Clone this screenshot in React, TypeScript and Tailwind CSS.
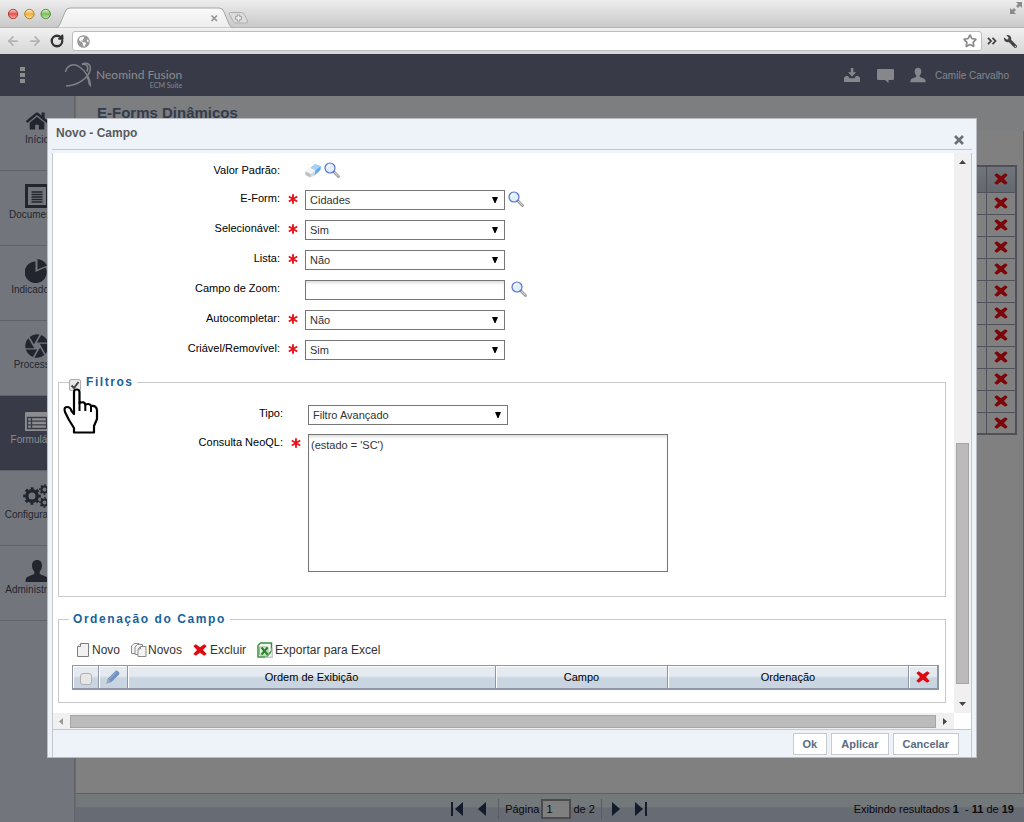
import React from "react";
import { FaHome, FaWrench, FaGlobeAmericas } from "react-icons/fa";
import { MdCamera } from "react-icons/md";
import { ArrowLeft, ArrowRight, Star, RotateCw } from "lucide-react";

const BustIcon = ({ className }: { className?: string }) => (
  <svg viewBox="0 0 24 24" className={className} fill="currentColor" aria-hidden="true">
    <path d="M12 1c3.3 0 5 2.3 5 5.5 0 2.6-.8 4.6-2.3 6v2.3c0 .8 7.3 2.4 8.3 4.7.4 1 .5 2.3.5 3.5H.5c0-1.2.1-2.5.5-3.5 1-2.3 8.3-3.9 8.3-4.7v-2.3C7.8 11.1 7 9.1 7 6.5 7 3.3 8.7 1 12 1z" />
  </svg>
);

const DocumentIcon = ({ className }: { className?: string }) => (
  <svg viewBox="0 0 24 24" className={className} fill="none" stroke="currentColor" aria-hidden="true">
    <rect x="1.5" y="1.5" width="21" height="21" strokeWidth="3" />
    <path d="M6.500 8h11M6.500 10.500h11M6.500 13h11M6.500 15.500h11M6.500 18h11" strokeWidth="1.3" />
  </svg>
);

const PieIcon = ({ className }: { className?: string }) => (
  <svg viewBox="0 0 24 24" className={className} fill="currentColor" aria-hidden="true">
    <path d="M10.500 2.500V13l10-4.500A11 10.800 0 1 1 10.500 2.500z" />
    <path d="M12.500 0a12 12 0 0 1 9.500 6.500L12.500 10.500z" />
  </svg>
);

const GearsIcon = ({ className }: { className?: string }) => (
  <svg viewBox="0 0 28 24" className={className} fill="none" stroke="currentColor" aria-hidden="true">
    <circle cx="9" cy="12" r="5.200" strokeWidth="3.400" />
    <circle cx="9" cy="12" r="7.600" strokeWidth="2.400" strokeDasharray="2.980 2.980" strokeDashoffset="1.500" />
    <circle cx="21.500" cy="5.500" r="3" strokeWidth="2" />
    <circle cx="21.500" cy="5.500" r="4.500" strokeWidth="1.600" strokeDasharray="1.770 1.770" strokeDashoffset=".9" />
    <circle cx="21.500" cy="18.500" r="3" strokeWidth="2" />
    <circle cx="21.500" cy="18.500" r="4.500" strokeWidth="1.600" strokeDasharray="1.770 1.770" strokeDashoffset=".9" />
  </svg>
);

const FormListIcon = ({ className }: { className?: string }) => (
  <svg viewBox="0 0 24 24" className={className} aria-hidden="true">
    <rect x="0" y="3" width="24" height="19" rx="1" fill="currentColor" />
    <path d="M2.500 8.500h19v11h-19zM2.500 12.200h19M2.500 15.900h19M6.500 8.500v11" fill="none" stroke="#383b47" strokeWidth="1.3" />
  </svg>
);

const Magnifier = () => (
  <svg viewBox="0 0 16 16" className="size-4" aria-hidden="true">
    <path d="M9.500 9.500l5 5" stroke="#8a8a8a" strokeWidth="2.6" strokeLinecap="round" />
    <path d="M10.500 10.300l3.800 3.800" stroke="#d8d8d8" strokeWidth="1.200" strokeLinecap="round" />
    <circle cx="6" cy="6" r="5" fill="#e2eefb" stroke="#5574cf" strokeWidth="1.2" />
    <path d="M3.200 5.600a3 3 0 0 1 2.600-2.400" stroke="#fff" strokeWidth="1.2" fill="none" />
  </svg>
);

const Eraser = () => (
  <svg viewBox="0 0 16 16" className="size-4" aria-hidden="true">
    <path d="M5.500 6L10 2.200l5.800 2L15.500 8l-6 5.500z" fill="#5aa9ea" />
    <path d="M5.500 6L10 2.200l5.800 2-5.500 4.300z" fill="#a5d3f7" />
    <path d="M0.500 9.500L5.500 6l5 2.500-1 5L5 15.500l-4.500-2.500z" fill="#d4d8dc" />
    <path d="M0.500 9.500L5.500 6l5 2.500-5 3.500z" fill="#f3f5f7" />
    <path d="M0.500 9.500l5 2.500v3.300l-5-2.300z" fill="#bcc1c6" />
  </svg>
);

const RedCross = ({ className }: { className?: string }) => (
  <svg viewBox="0 0 14 12" className={className} aria-hidden="true">
    <path
      d="M2.800.3l4.200 3L11.200.3 13.700 2l-3.700 4 3.700 4-2.500 1.800L7 8.700l-4.200 3L.3 10 4 6 .3 2z"
      fill="currentColor"
    />
  </svg>
);

const Required = () => (
  <svg viewBox="0 0 10 10" className="mt-1 size-[10px] justify-self-center" role="img" aria-label="obrigatório">
    <path d="M5 .3v9.400M.8 2.500l8.400 5M9.200 2.500l-8.400 5" stroke="#e8141c" strokeWidth="1.9" />
  </svg>
);

const menu = [
  { label: "Início", icon: <FaHome className="size-[22px]" /> },
  { label: "Documentos", icon: <DocumentIcon className="size-6" /> },
  { label: "Indicadores", icon: <PieIcon className="size-6" /> },
  { label: "Processos", icon: <MdCamera className="size-7" /> },
  { label: "Formulários", icon: <FormListIcon className="size-6" />, active: true },
  { label: "Configurações", icon: <GearsIcon className="h-6 w-7" /> },
  { label: "Administração", icon: <BustIcon className="size-6" /> },
];

function BrowserChrome() {
  return (
    <div className="shrink-0">
      <div className="flex h-7 items-start border-b border-[#b4b4b4] bg-linear-to-b from-[#ededed] to-[#c9c9c9]">
        <svg viewBox="0 0 60 28" className="h-7 w-[56px] shrink-0" aria-hidden="true">
          <defs>
            <linearGradient id="shine" x1="0" y1="0" x2="0" y2="1">
              <stop offset="0" stopColor="#fff" stopOpacity=".7" />
              <stop offset=".5" stopColor="#fff" stopOpacity="0" />
              <stop offset="1" stopColor="#fff" stopOpacity=".5" />
            </linearGradient>
          </defs>
          {[
            [14, "#e8524c", "#a33631"],
            [31.5, "#f1b23c", "#a97722"],
            [49, "#7cc05a", "#4c8434"],
          ].map(([cx, fill, stroke]) => (
            <g key={String(cx)}>
              <circle cx={cx as number} cy="14" r="5" fill={fill as string} stroke={stroke as string} />
              <circle cx={cx as number} cy="14" r="4.5" fill="url(#shine)" />
            </g>
          ))}
        </svg>
        <svg viewBox="0 0 194 28" className="h-7 w-[194px] shrink-0" aria-hidden="true">
          <defs>
            <linearGradient id="tab" x1="0" y1="0" x2="0" y2="1">
              <stop offset="0" stopColor="#fafafa" />
              <stop offset="1" stopColor="#ededed" />
            </linearGradient>
          </defs>
          <path d="M0 28q3-1 4-4l5-12q1-4 5-4h149q4 0 5 4l5 12q1 3 4 4z" fill="url(#tab)" stroke="#a6a6a6" />
          <path d="M155.500 15.500l5.500 5.500M161 15.500l-5.500 5.500" stroke="#949494" strokeWidth="1.7" />
          <path d="M174.500 12.500h11q2 0 3 2l3 6.500q1 2-1.500 2h-10q-2 0-3-2l-3.500-6.500q-1-2 1-2z" fill="#dcdcdc" stroke="#aeaeae" />
          <path d="M182.500 14.500v7M179 18h7" stroke="#a0a0a0" strokeWidth="3.5" />
          <path d="M182.500 15.500v5M180 18h5" stroke="#f6f6f6" strokeWidth="1.5" />
        </svg>
        <svg viewBox="0 0 12 12" className="mt-[2px] mr-[2px] ml-auto size-3" fill="#8b8b8b" aria-hidden="true">
          <path d="M6 0h6v6l-2-2-2 2-2-2 2-2zM0 6l2 2 2-2 2 2-2 2 2 2H0z" />
        </svg>
      </div>
      <div className="flex h-[26px] items-center bg-linear-to-b from-[#f1f1f1] to-[#d6d6d6] pr-[7px] pl-[6px]">
        <button aria-label="Voltar" className="mr-2 text-[#b4b4b4]">
          <ArrowLeft className="size-[14px]" strokeWidth={3} />
        </button>
        <button aria-label="Avançar" className="mr-2 text-[#b4b4b4]">
          <ArrowRight className="size-[14px]" strokeWidth={3} />
        </button>
        <button aria-label="Recarregar" className="mr-2 text-[#333]">
          <RotateCw className="size-[14px]" strokeWidth={4} />
        </button>
        <div className="flex h-5 flex-1 items-center rounded-[3px] border border-[#bdbdbd] bg-white px-1">
          <FaGlobeAmericas className="size-[13px] text-[#9a9a9a]" />
          <input aria-label="Endereço" className="min-w-0 flex-1 bg-transparent px-1 text-xs outline-none" />
          <Star className="size-[14px] text-[#8a8a8a]" strokeWidth={3} />
        </div>
        <svg viewBox="0 0 10 8" className="ml-[5px] h-2 w-[10px]" fill="none" stroke="#444" strokeWidth="1.8" aria-hidden="true">
          <path d="M1 .8L4 4 1 7.200M5.500.8l3 3.200-3 3.200" />
        </svg>
        <FaWrench className="ml-[7px] size-[13px] -scale-x-100 text-[#444]" />
      </div>
    </div>
  );
}

function AppHeader() {
  return (
    <header className="flex h-[42px] shrink-0 items-center bg-[#383b47] pr-[15px] text-[#85878b]">
      <button aria-label="Menu" className="ml-5 grid w-[5px] gap-[2px]">
        <span className="h-[4px] bg-[#8d8d8d]" />
        <span className="h-[4px] bg-[#8d8d8d]" />
        <span className="h-[4px] bg-[#8d8d8d]" />
      </button>
      <svg viewBox="0 0 28 26" className="ml-[39px] h-[26px] w-7" fill="none" stroke="#808286" aria-hidden="true">
        <path d="M1.500 10C2.500 4 9 .5 15 4.500S25.500 15 26.500 24.500" strokeWidth="1.5" />
        <path d="M18 2c6-2 9.500 1 8 6.500C24 16 14 23.500 2 24" strokeWidth="1.5" />
        <path d="M18 2.500c5-1 7 2 5 7" strokeWidth="1.5" />
        <path d="M23 13.500q2.500 4.500 3 9.500" strokeWidth="2.5" />
      </svg>
      <div className="ml-1 flex flex-col items-end pt-[7px] font-[Lato,sans-serif]">
        <span className="text-[12px] leading-[12px] font-medium">Neomind Fusion</span>
        <span className="text-[7px] leading-[8px]">ECM Suite</span>
      </div>
      <div className="ml-auto flex items-center">
        <svg viewBox="0 0 16 14" className="mr-[17px] h-[14px] w-4" fill="currentColor" aria-label="Downloads">
          <path d="M6.800 0h2.600v4.200h2.800L8 8.500 3.900 4.200h2.900z" />
          <path d="M0 9.500l2-1.600h2l1.500 2.300h5L12 7.900h2l2 1.600V14H0z" />
        </svg>
        <svg viewBox="0 0 17 15" className="mr-4 h-[15px] w-[17px]" fill="currentColor" aria-label="Mensagens">
          <path d="M1 1h15q1 0 1 1v9q0 1-1 1h-4.500v3L8 12H1q-1 0-1-1V2q0-1 1-1z" />
        </svg>
        <BustIcon className="mr-[9px] size-4" />
        <a href="#" className="text-[10px]">Camile Carvalho</a>
      </div>
    </header>
  );
}

function Sidebar() {
  return (
    <nav className="w-[75px] shrink-0 border-r border-[#63656a] bg-[#73757d]">
      {menu.map((m) => (
        <a
          key={m.label}
          href="#"
          className={
            m.active
              ? "flex h-[75px] flex-col items-center border-b border-[#5d5f69] bg-[#383b47] text-[#8c8d90]"
              : "flex h-[75px] flex-col items-center border-b border-[#5f616b] text-[#23252e]"
          }
        >
          <span className="mt-[13px] flex h-6 items-center justify-center">{m.icon}</span>
          <span className="text-[10px] leading-[14px]">{m.label}</span>
        </a>
      ))}
    </nav>
  );
}

function Background() {
  return (
    <main className="flex min-w-0 flex-1 flex-col border-l border-[#6a6a6c] bg-[#808080]">
      <h1 className="h-[35px] bg-[#7c7e80] pl-[21px] text-[15px] leading-[34px] font-bold text-[#343c4c]">E-Forms Dinâmicos</h1>
      <div className="flex-1 border-r border-[#5f5f61] pt-[34px] pr-[6px] pl-5">
        <table className="w-full border-collapse border-2 border-[#50505a]">
          <tbody>
            {Array.from({ length: 12 }, (_, i) => (
              <tr key={i} className={i === 0 ? "h-[26px] bg-linear-to-b from-[#71767b] to-[#64696f]" : "h-[22px]"}>
                <td className="border border-[#50505a]" />
                <td className="w-[30px] border border-[#50505a] p-0 pl-px">
                  <button aria-label="Excluir" className="mx-auto block">
                    <RedCross className="h-3 w-[14px] text-[#7c0509]" />
                  </button>
                </td>
              </tr>
            ))}
          </tbody>
        </table>
      </div>
      <footer className="grid h-[29px] grid-cols-[1fr_auto_1fr] items-center border-t border-[#5b5e62] bg-linear-to-b from-[#73787b] from-45% to-[#676b74] to-50% pt-[2px] text-[11px] text-[#0a0a0a]">
        <div />
        <div className="flex items-center pr-[2px]">
          <button aria-label="Primeira página">
            <svg viewBox="0 0 12 14" className="mr-[15px] h-[14px] w-3" fill="#141b2b"><path d="M0 0h2v14H0zM12 0v14L4 7z" /></svg>
          </button>
          <button aria-label="Página anterior">
            <svg viewBox="0 0 8 14" className="mr-3 h-[14px] w-2" fill="#141b2b"><path d="M8 0v14L0 7z" /></svg>
          </button>
          <span className="mr-[6px] h-5 w-px bg-[#585b60]" />
          <label htmlFor="page">Página</label>
          <input id="page" defaultValue="1" className="mx-[2px] h-5 w-[30px] border-2 border-[#4c4c4e] bg-[#7f7f7f] px-[3px]" />
          <span>de 2</span>
          <span className="mr-[10px] ml-[6px] h-5 w-px bg-[#585b60]" />
          <button aria-label="Próxima página">
            <svg viewBox="0 0 8 14" className="mr-[15px] h-[14px] w-2" fill="#141b2b"><path d="M0 0v14l8-7z" /></svg>
          </button>
          <button aria-label="Última página">
            <svg viewBox="0 0 12 14" className="h-[14px] w-3" fill="#141b2b"><path d="M10 0h2v14h-2zM0 0v14l8-7z" /></svg>
          </button>
        </div>
        <p className="pr-[10px] text-right whitespace-pre">
          Exibindo resultados <b>1</b>{"  - "}<b>11</b> de <b>19</b>
        </p>
      </footer>
    </main>
  );
}

function Dropdown({ id, value }: { id: string; value: string }) {
  return (
    <div className="relative w-[200px]">
      <select id={id} defaultValue={value} className="block h-5 w-full appearance-none border border-[#767676] bg-white pl-1 text-[11px] text-[#333]">
        <option>{value}</option>
      </select>
      <svg viewBox="0 0 6 6" className="pointer-events-none absolute top-[7px] right-[7px] size-[6px]" aria-hidden="true">
        <path d="M0 0h6L3.500 6h-1z" />
      </svg>
    </div>
  );
}

type Field = { id: string; label: string; value?: string; required?: boolean; search?: boolean };

const fields: Field[] = [
  { id: "eform", label: "E-Form:", value: "Cidades", required: true, search: true },
  { id: "selecionavel", label: "Selecionável:", value: "Sim", required: true },
  { id: "lista", label: "Lista:", value: "Não", required: true },
  { id: "zoom", label: "Campo de Zoom:", search: true },
  { id: "auto", label: "Autocompletar:", value: "Não", required: true },
  { id: "criavel", label: "Criável/Removível:", value: "Sim", required: true },
];

const HandCursor = () => (
  <svg viewBox="0 0 38 50" className="pointer-events-none absolute top-[7px] -left-[7px] z-10 h-[50px] w-[38px]" aria-hidden="true">
    <path
      d="M12 27V6q0-2.500 2.700-2.500T17.500 6v11q5-2 5.800 1.500 4.700-1.500 5.700 1.500 5-1 6 4v9l-3 7v6.500H12V42l-5-8-4-8q-1.500-5 2-5t4.500 4l2.500 3z"
      fill="#fff"
      stroke="#000"
      strokeWidth="2.2"
      strokeLinejoin="round"
    />
    <path d="M17.500 16v9M23.300 18v7M29 20v6" stroke="#000" strokeWidth="2" />
  </svg>
);

function SortTable() {
  const head = "border-r border-[#9095a5] p-0 font-normal shadow-[inset_1px_1px_0_#fff]";
  return (
    <table className="mt-[7px] h-[25px] w-full table-fixed border-separate border-spacing-0 border border-b-2 border-[#9095a5] bg-linear-to-b from-[#e4eaf0] from-45% to-[#c9d5e1] to-55% text-[11px] text-black">
      <colgroup>
        <col className="w-[26px]" />
        <col className="w-[29px]" />
        <col />
        <col className="w-[172px]" />
        <col className="w-[241px]" />
        <col className="w-[29px]" />
      </colgroup>
      <thead>
        <tr>
          <th className={head}>
            <input type="checkbox" aria-label="Selecionar todos" className="mx-auto mt-1 block size-3 appearance-none rounded-[3px] border border-[#b0b0b0] bg-[#e6e6e6]" />
          </th>
          <th className={head}>
            <svg viewBox="0 0 14 14" className="mx-auto size-[14px]" aria-label="Editar">
              <path d="M.5 13.500l1.500-5L9.500 1q1-1 2.300.2l1 1q1.200 1.300.2 2.300L5.500 12z" fill="#6f91bf" />
              <path d="M.5 13.500l1.500-5L5.500 12z" fill="#9fa9b5" />
              <path d="M3.500 9L10 2.500" stroke="#a5bfdf" />
            </svg>
          </th>
          <th className={head}>Ordem de Exibição</th>
          <th className={head}>Campo</th>
          <th className={head}>Ordenação</th>
          <th className={head}>
            <button aria-label="Excluir" className="mx-auto block">
              <RedCross className="h-3 w-[14px] text-[#dd0a12]" />
            </button>
          </th>
        </tr>
      </thead>
    </table>
  );
}

function ActionBar() {
  return (
    <div className="flex h-4 items-center gap-[11px] pl-1 text-[12px] text-[#333]">
      <button className="flex items-center">
        <svg viewBox="0 0 14 16" className="mr-[2px] h-4 w-[14px]" aria-hidden="true">
          <path d="M4.500 1.500h8v13h-11v-10z" fill="#f1f1f1" stroke="#7e7e7e" />
          <path d="M4.500 1.500v3h-3" fill="#fff" stroke="#7e7e7e" />
        </svg>
        Novo
      </button>
      <button className="flex items-center">
        <svg viewBox="0 0 16 16" className="mr-[1px] size-4" fill="#f4f4f4" stroke="#8c8c8c" aria-hidden="true">
          <path d="M3 1.500h5v10H.5V4z" />
          <path d="M6.500 2.500h5v10H4V5z" />
          <path d="M9.500 4.500h5.500v10H7V7z" />
          <path d="M9.500 4.500V7H7" fill="none" />
        </svg>
        Novos
      </button>
      <button className="flex items-center">
        <RedCross className="mr-[3px] h-3 w-[14px] text-[#dd0a12]" />
        Excluir
      </button>
      <button className="flex items-center">
        <svg viewBox="0 0 16 16" className="mr-[2px] size-4" aria-hidden="true">
          <path d="M3.500 1h11v8l-5 6H1V3.500z" fill="#f5faf4" stroke="#3d8f3f" strokeWidth="1.500" />
          <path d="M2.500 5h8.500v8H2.500z" fill="#e3f1e0" stroke="#8cc08a" />
          <path d="M4.500 5.500l6 7M10.500 5.500L4.500 12.500" stroke="#2c7d2c" strokeWidth="2" />
          <path d="M8 15.200h7.200V6" stroke="#c2c6c2" strokeWidth="1.400" fill="none" />
        </svg>
        Exportar para Excel
      </button>
    </div>
  );
}

const legendStyle = "flex h-[14px] items-center text-[12px] leading-[14px] font-bold tracking-[0.13em] text-[#17629c]";

function Dialog() {
  const dialogButton = "h-[22px] border border-[#c6cacd] bg-white px-[9px] text-[11px] font-bold text-[#5b6b7f]";
  return (
    <section
      role="dialog"
      aria-label="Novo - Campo"
      className="absolute inset-x-[47px] top-[118px] border border-[#b9bdc1] bg-[#edf3f8] px-1"
    >
      <div className="flex h-[31px] items-start justify-between border-b border-[#c4c8cb] pr-[8px] pl-1">
        <h2 className="text-[12px] leading-7 font-bold text-[#5a5a5e]">Novo - Campo</h2>
        <button aria-label="Fechar" className="mt-4">
          <svg viewBox="0 0 10 10" className="size-[10px]" stroke="#6c7075" strokeWidth="2.6">
            <path d="M1 1l8 8M9 1L1 9" />
          </svg>
        </button>
      </div>
      <div className="mt-[3px] border-x border-[#c4c8cb]">
        <div className="grid grid-cols-[1fr_17px] bg-white">
          <form className="min-w-0 pt-[2px] pr-2 pb-[10px] pl-[5px] text-[11px] leading-4 text-black" onSubmit={(e) => e.preventDefault()}>
            <div className="grid h-[30px] grid-cols-[222px_25px_auto] items-center">
              <span className="text-right">Valor Padrão:</span>
              <span />
              <span className="flex gap-[3px]">
                <button type="button" aria-label="Limpar"><Eraser /></button>
                <button type="button" aria-label="Pesquisar"><Magnifier /></button>
              </span>
            </div>
            {fields.map((f) => (
              <div key={f.id} className="grid h-[30px] grid-cols-[222px_25px_auto] items-start pt-[5px]">
                <label htmlFor={f.id} className="text-right">{f.label}</label>
                {f.required ? <Required /> : <span />}
                <div className="flex items-start">
                  {f.value ? (
                    <Dropdown id={f.id} value={f.value} />
                  ) : (
                    <input id={f.id} className="mr-[3px] h-5 w-[200px] border border-[#767676] bg-white px-1 shadow-[inset_0_3px_3px_-1px_#ddd]" />
                  )}
                  {f.search && (
                    <button type="button" aria-label="Pesquisar" className="mt-px ml-[3px]"><Magnifier /></button>
                  )}
                </div>
              </div>
            ))}

            <fieldset className="mt-[10px] border border-[#c8c8c8] pt-4 pb-6">
              <legend className={`${legendStyle} ml-[10px] pr-[3px]`}>
                <span className="relative mt-[5px] mr-[5px] block size-3">
                  <input
                    id="filtros"
                    type="checkbox"
                    defaultChecked
                    className="block size-3 appearance-none rounded-[2px] border border-[#ababab] bg-[#e8e8e8]"
                  />
                  <svg viewBox="0 0 12 12" className="pointer-events-none absolute inset-0 size-3" fill="none" aria-hidden="true">
                    <path d="M2.500 6.500L5 9l4.500-6" stroke="#444" strokeWidth="2" />
                  </svg>
                  <HandCursor />
                </span>
                <label htmlFor="filtros">Filtros</label>
              </legend>
              <div className="grid grid-cols-[224px_25px_auto] items-start gap-y-[9px]">
                <label htmlFor="tipo" className="text-right">Tipo:</label>
                <span />
                <Dropdown id="tipo" value="Filtro Avançado" />
                <label htmlFor="query" className="text-right">Consulta NeoQL:</label>
                <Required />
                <textarea
                  id="query"
                  defaultValue="(estado = 'SC')"
                  className="block h-[138px] w-[360px] resize-none border border-[#767676] bg-white p-[2px] text-[#333] shadow-[inset_0_3px_3px_-1px_#ddd]"
                />
              </div>
            </fieldset>

            <fieldset className="mt-[15px] min-w-0 border border-[#c8c8c8] pt-4 pr-[6px] pb-3 pl-[13px]">
              <legend className={`${legendStyle} -ml-[3px] px-1`}>Ordenação do Campo</legend>
              <ActionBar />
              <SortTable />
            </fieldset>
          </form>
          <div className="flex flex-col items-center bg-[#f0f0f0]" aria-hidden="true">
            <svg viewBox="0 0 7 4" className="mt-[7px] h-1 w-[7px]" fill="#444"><path d="M0 4h7L3.500 0z" /></svg>
            <div className="flex-1" />
            <div className="h-[43%] w-[13px] border border-[#a5a5a5] bg-[#bbb]" />
            <svg viewBox="0 0 7 4" className="mt-[18px] mb-[7px] h-1 w-[7px]" fill="#444"><path d="M0 0h7L3.500 4z" /></svg>
          </div>
        </div>
        <div className="grid grid-cols-[1fr_17px] border-b border-[#c4c8cb] bg-white" aria-hidden="true">
          <div className="flex h-4 items-center bg-[#f0f0f0]">
            <svg viewBox="0 0 4 7" className="mx-[6px] h-[7px] w-1" fill="#999"><path d="M4 0v7L0 3.500z" /></svg>
            <div className="ml-px h-[13px] flex-1 border border-[#a5a5a5] bg-[#bbb]" />
            <svg viewBox="0 0 4 7" className="mr-[7px] ml-[7px] h-[7px] w-1" fill="#444"><path d="M0 0v7l4-3.500z" /></svg>
          </div>
        </div>
        <div className="flex justify-end gap-1 pt-[3px] pr-3 pb-[2px]">
          <button className={dialogButton}>Ok</button>
          <button className={dialogButton}>Aplicar</button>
          <button className={dialogButton}>Cancelar</button>
        </div>
      </div>
    </section>
  );
}

export default function App() {
  return (
    <div className="relative flex min-h-screen flex-col font-['Liberation_Sans',Arial,sans-serif]">
      <BrowserChrome />
      <AppHeader />
      <div className="flex flex-1">
        <Sidebar />
        <Background />
      </div>
      <Dialog />
    </div>
  );
}
